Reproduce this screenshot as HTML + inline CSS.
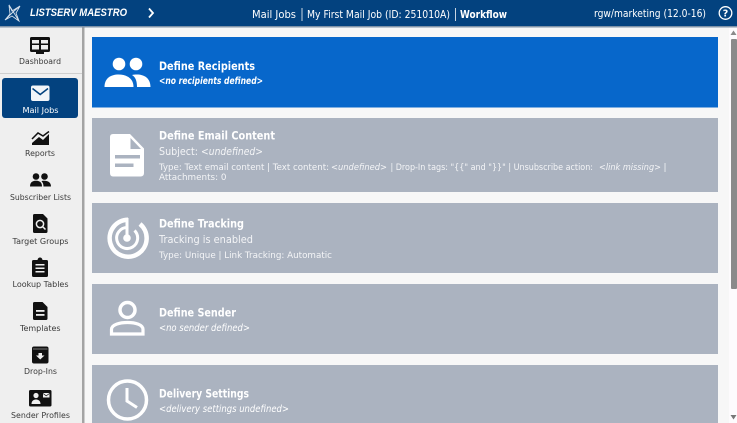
<!DOCTYPE html>
<html><head><meta charset="utf-8"><title>Workflow</title>
<style>
html,body{margin:0;padding:0;width:737px;height:423px;overflow:hidden;background:#f7f7f7}
svg{display:block;font-family:"DejaVu Sans","Liberation Sans",sans-serif}
.s{font-size:8px;fill:#3a3a3a}
.sw{font-size:8px;fill:#fff}
.h{font-size:10.500px;fill:#fff}
.b{font-family:"Liberation Sans",sans-serif;font-size:11px}
.t{font-size:11.500px;font-weight:bold;fill:#fff}
.u{font-size:9.500px;fill:#fff;font-style:italic}
.m{font-size:10.500px;fill:#f4f5f7}
.d{font-size:9px;fill:#f4f5f7}
.i{font-style:italic}
</style></head><body>
<svg width="737" height="423" viewBox="0 0 737 423" xmlns="http://www.w3.org/2000/svg">
<rect width="737" height="423" fill="#f7f7f7"/>
<!-- scrollbar -->
<rect x="729" y="27" width="8" height="396" fill="#fdfbfd"/>
<rect x="731" y="39" width="6" height="250" rx="1" fill="#8a8a8a"/>
<path d="M730.500 35L733.500 30.500L736.500 35Z" fill="#8a8a8a"/>
<path d="M730.500 415L733.500 419.500L736.500 415Z" fill="#777"/>
<!-- header -->
<rect width="737" height="26" fill="#03427f"/>
<rect y="26" width="737" height="1.500" fill="#7f93a8"/>
<g fill="none" stroke="#d5e0ec" stroke-width=".9">
<path d="M9 5L14 13L19 21M20 6L13 12L5 20M9 5L12 11L20 6L16 13L19 21L12 16L5 20L10 14Z"/>
</g>
<text x="30" y="16" class="h b" font-weight="bold" font-style="italic" textLength="97" lengthAdjust="spacingAndGlyphs">LISTSERV MAESTRO</text>
<path d="M149 8.500L153 13L149 17.500" fill="none" stroke="#fff" stroke-width="1.800"/>
<text x="252" y="18" class="h" textLength="44" lengthAdjust="spacingAndGlyphs">Mail Jobs</text>
<rect x="301.500" y="8" width="1" height="13" fill="#c8d5e2"/>
<text x="307" y="18" class="h" textLength="143" lengthAdjust="spacingAndGlyphs">My First Mail Job (ID: 251010A)</text>
<rect x="455" y="8" width="1" height="13" fill="#c8d5e2"/>
<text x="460" y="18" class="h" font-weight="bold" textLength="47" lengthAdjust="spacingAndGlyphs">Workflow</text>
<text x="594" y="17" class="h" textLength="112" lengthAdjust="spacingAndGlyphs">rgw/marketing (12.0-16)</text>
<circle cx="725.500" cy="13" r="6.300" fill="none" stroke="#fff" stroke-width="1.300"/>
<text x="725.500" y="16.500" font-size="9.500" font-weight="bold" fill="#fff" text-anchor="middle">?</text>
<!-- sidebar -->
<rect y="27.500" width="82" height="396" fill="#efefef"/>
<rect x="82" y="27.500" width="2.500" height="396" fill="#a4a4a4"/>
<rect y="73" width="82" height="1" fill="#cfcfcf"/>
<rect x="2" y="78" width="76" height="40" rx="3" fill="#03427f"/>
<!-- dashboard icon -->
<rect x="30" y="37" width="20" height="15" rx="1.500" fill="#111"/>
<rect x="36" y="52" width="8" height="2" fill="#111"/>
<rect x="32" y="40" width="7" height="3.500" fill="#efefef"/><rect x="41" y="40" width="7" height="3.500" fill="#efefef"/>
<rect x="32" y="45" width="7" height="4.500" fill="#efefef"/><rect x="41" y="45" width="7" height="4.500" fill="#efefef"/>
<text x="19" y="64" class="s" textLength="42" lengthAdjust="spacingAndGlyphs">Dashboard</text>
<!-- mail -->
<rect x="31" y="85.500" width="18.500" height="15.500" rx="2" fill="#f2f5f9"/>
<path d="M32.500 88.500L40.200 94.500L48 88.500" fill="none" stroke="#03427f" stroke-width="1.500"/>
<text x="22.500" y="113" class="sw" textLength="36" lengthAdjust="spacingAndGlyphs">Mail Jobs</text>
<!-- reports -->
<path d="M32 143L39 137L43 140L49 134V145H32Z" fill="#111"/>
<path d="M32 139L38 133L43 136L49 131.500" fill="none" stroke="#111" stroke-width="1.500"/>
<text x="25" y="156" class="s" textLength="30" lengthAdjust="spacingAndGlyphs">Reports</text>
<!-- subscriber -->
<circle cx="36" cy="176.500" r="3.300" fill="#111"/><circle cx="44.500" cy="176.500" r="3.300" fill="#111"/>
<path d="M30 186.500C30 182 33 180.800 36 180.800C39 180.800 42 182 42 186.500Z" fill="#111"/>
<path d="M43.500 186.500C43.500 184 42.800 182.300 41.500 181.200C42.500 180.800 43.500 180.800 44.500 180.800C48 180.800 51 182.500 51 186.500Z" fill="#111"/>
<text x="10" y="200" class="s" textLength="61" lengthAdjust="spacingAndGlyphs">Subscriber Lists</text>
<!-- target groups -->
<path d="M34.500 214H43L47.500 218.500V231.500Q47.500 233 46 233H34.500Q33 233 33 231.500V215.500Q33 214 34.500 214Z" fill="#111"/>
<circle cx="40" cy="224" r="3.600" fill="none" stroke="#efefef" stroke-width="1.500"/>
<path d="M42.500 226.500L45.500 229.500" stroke="#efefef" stroke-width="1.500"/>
<text x="12.500" y="244" class="s" textLength="56" lengthAdjust="spacingAndGlyphs">Target Groups</text>
<!-- lookup -->
<path d="M33.500 260H37.500Q38 257.500 40 257.500Q42 257.500 42.500 260H46.500Q48 260 48 261.500V275.500Q48 277 46.500 277H33.500Q32 277 32 275.500V261.500Q32 260 33.500 260Z" fill="#111"/>
<rect x="35.500" y="264" width="9" height="1.500" fill="#efefef"/><rect x="35.500" y="267.500" width="9" height="1.500" fill="#efefef"/><rect x="35.500" y="271" width="9" height="1.500" fill="#efefef"/>
<text x="12.500" y="287" class="s" textLength="56" lengthAdjust="spacingAndGlyphs">Lookup Tables</text>
<!-- templates -->
<path d="M34.500 302H42.500L47.500 307V318.500Q47.500 320 46 320H34.500Q33 320 33 318.500V303.500Q33 302 34.500 302Z" fill="#111"/>
<rect x="36" y="310" width="8.500" height="1.800" fill="#efefef"/><rect x="36" y="314" width="8.500" height="1.800" fill="#efefef"/>
<text x="20" y="331" class="s" textLength="40.500" lengthAdjust="spacingAndGlyphs">Templates</text>
<!-- drop-ins -->
<rect x="32" y="346.500" width="16.500" height="17" rx="2" fill="#111"/>
<rect x="33" y="348.500" width="14.500" height="1" fill="#777"/>
<path d="M38.500 353V355.500H36L40.200 359.500L44.500 355.500H42V353Z" fill="#efefef"/>
<text x="24" y="374" class="s" textLength="33" lengthAdjust="spacingAndGlyphs">Drop-Ins</text>
<!-- sender profiles -->
<rect x="29" y="390" width="22.500" height="16.500" rx="1.500" fill="#111"/>
<circle cx="36" cy="395.500" r="2.600" fill="#efefef"/>
<path d="M31.500 404C31.500 400.500 34 399.500 36 399.500C38 399.500 40.500 400.500 40.500 404Z" fill="#efefef"/>
<rect x="43" y="393" width="6.500" height="4.500" fill="#efefef"/>
<path d="M43 393.500L46.200 395.800L49.500 393.500" fill="none" stroke="#111" stroke-width=".7"/>
<text x="11" y="418" class="s" textLength="59" lengthAdjust="spacingAndGlyphs">Sender Profiles</text>

<!-- card 1 -->
<rect x="92" y="37" width="626" height="70.500" fill="#0767cb"/>
<circle cx="119" cy="64" r="6.300" fill="#fff"/><circle cx="136" cy="64" r="6.300" fill="#fff"/>
<path d="M104.500 87C104.500 78 111 74.500 118.500 74.500C126 74.500 133.500 78 133.500 87Z" fill="#fff"/>
<path d="M137 87C137 81 135.500 77 132 75C133.500 74.500 135 74.500 137 74.500C144 74.500 150.500 78 150.500 87Z" fill="#fff"/>
<text x="159" y="70" class="t" textLength="96" lengthAdjust="spacingAndGlyphs">Define Recipients</text>
<text x="159" y="84" class="u" textLength="104" lengthAdjust="spacingAndGlyphs" font-weight="bold">&lt;no recipients defined&gt;</text>

<!-- card 2 -->
<rect x="92" y="118" width="626" height="74" fill="#abb3c0"/>
<path d="M113 134H130L144 148.500V173Q144 176.500 140.500 176.500H113Q110 176.500 110 173V137Q110 134 113 134Z" fill="#fff"/>
<path d="M130.500 138L141 149H130.500Z" fill="#abb3c0"/>
<rect x="115" y="155" width="25" height="3.500" fill="#abb3c0"/><rect x="115" y="163.500" width="18.500" height="3.500" fill="#abb3c0"/>
<text x="159" y="139.500" class="t" textLength="116" lengthAdjust="spacingAndGlyphs">Define Email Content</text>
<text x="159" y="155" class="m" textLength="39" lengthAdjust="spacingAndGlyphs">Subject:</text>
<text x="201" y="155" class="m i" textLength="62" lengthAdjust="spacingAndGlyphs">&lt;undefined&gt;</text>
<text x="159" y="170" class="d" textLength="170" lengthAdjust="spacingAndGlyphs">Type: Text email content | Text content:</text>
<text x="331" y="170" class="d i" textLength="56" lengthAdjust="spacingAndGlyphs">&lt;undefined&gt;</text>
<text x="390.500" y="170" class="d" textLength="202.500" lengthAdjust="spacingAndGlyphs">| Drop-In tags: "{{" and "}}" | Unsubscribe action:</text>
<text x="599" y="170" class="d i" textLength="62" lengthAdjust="spacingAndGlyphs">&lt;link missing&gt;</text>
<text x="663.500" y="170" class="d">|</text>
<text x="159" y="180" class="d" textLength="67.500" lengthAdjust="spacingAndGlyphs">Attachments: 0</text>

<!-- card 3 -->
<rect x="92" y="203" width="626" height="70" fill="#abb3c0"/>
<g fill="none" stroke="#fff">
<path d="M128 219.700A18.500 18.500 0 1 0 140 224" stroke-width="4.500"/>
<path d="M127 227.500A10.500 10.500 0 1 0 134.500 230.500" stroke-width="3"/>
<path d="M127 218V238" stroke-width="3"/>
</g>
<circle cx="127" cy="238" r="3.800" fill="#fff"/>
<text x="159" y="227.500" class="t" textLength="85" lengthAdjust="spacingAndGlyphs">Define Tracking</text>
<text x="159" y="243" class="m" textLength="94" lengthAdjust="spacingAndGlyphs">Tracking is enabled</text>
<text x="159" y="258" class="d" textLength="173" lengthAdjust="spacingAndGlyphs">Type: Unique | Link Tracking: Automatic</text>

<!-- card 4 -->
<rect x="92" y="284" width="626" height="70" fill="#abb3c0"/>
<circle cx="127.500" cy="310" r="7.500" fill="none" stroke="#fff" stroke-width="3.500"/>
<path d="M111.500 334V329.500C111.500 324.500 120 322.500 127.500 322.500C135 322.500 143 324.500 143 329.500V334Z" fill="none" stroke="#fff" stroke-width="3.200"/>
<text x="159" y="316.500" class="t" textLength="77" lengthAdjust="spacingAndGlyphs">Define Sender</text>
<text x="159" y="331" class="u" textLength="91" lengthAdjust="spacingAndGlyphs">&lt;no sender defined&gt;</text>

<!-- card 5 -->
<rect x="92" y="365" width="626" height="58" fill="#abb3c0"/>
<circle cx="127.500" cy="400" r="19" fill="none" stroke="#fff" stroke-width="3.500"/>
<path d="M127 388V401L137 407.500" fill="none" stroke="#fff" stroke-width="3"/>
<text x="159" y="397.500" class="t" textLength="90" lengthAdjust="spacingAndGlyphs">Delivery Settings</text>
<text x="159" y="412" class="u" textLength="130" lengthAdjust="spacingAndGlyphs">&lt;delivery settings undefined&gt;</text>
</svg>
</body></html>
